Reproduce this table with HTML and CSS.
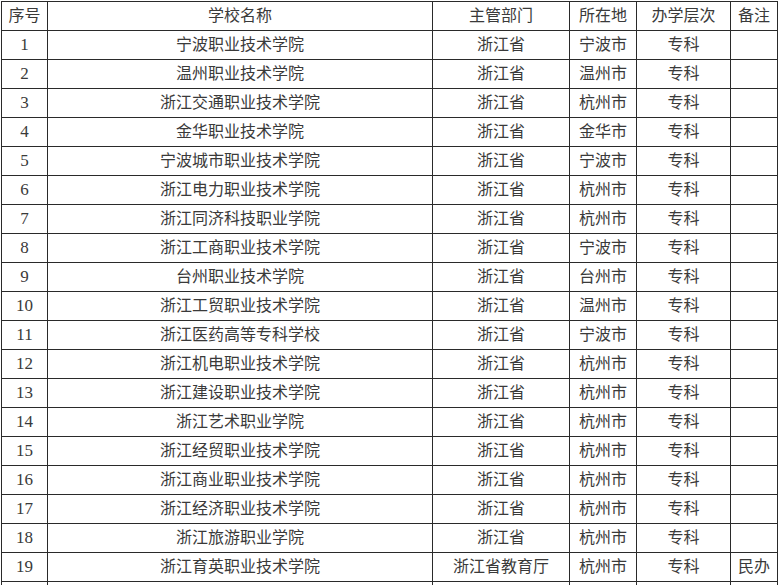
FILE: index.html
```html
<!DOCTYPE html>
<html lang="zh">
<head>
<meta charset="utf-8">
<title>学校列表</title>
<link rel="stylesheet" href="styles.css">
</head>
<body>
<table class="list">
<colgroup>
<col class="c1"><col class="c2"><col class="c3"><col class="c4"><col class="c5"><col class="c6">
</colgroup>
<tr><td>序号</td><td>学校名称</td><td>主管部门</td><td>所在地</td><td>办学层次</td><td>备注</td></tr>
<tr><td class="num">1</td><td>宁波职业技术学院</td><td>浙江省</td><td>宁波市</td><td>专科</td><td></td></tr>
<tr><td class="num">2</td><td>温州职业技术学院</td><td>浙江省</td><td>温州市</td><td>专科</td><td></td></tr>
<tr><td class="num">3</td><td>浙江交通职业技术学院</td><td>浙江省</td><td>杭州市</td><td>专科</td><td></td></tr>
<tr><td class="num">4</td><td>金华职业技术学院</td><td>浙江省</td><td>金华市</td><td>专科</td><td></td></tr>
<tr><td class="num">5</td><td>宁波城市职业技术学院</td><td>浙江省</td><td>宁波市</td><td>专科</td><td></td></tr>
<tr><td class="num">6</td><td>浙江电力职业技术学院</td><td>浙江省</td><td>杭州市</td><td>专科</td><td></td></tr>
<tr><td class="num">7</td><td>浙江同济科技职业学院</td><td>浙江省</td><td>杭州市</td><td>专科</td><td></td></tr>
<tr><td class="num">8</td><td>浙江工商职业技术学院</td><td>浙江省</td><td>宁波市</td><td>专科</td><td></td></tr>
<tr><td class="num">9</td><td>台州职业技术学院</td><td>浙江省</td><td>台州市</td><td>专科</td><td></td></tr>
<tr><td class="num">10</td><td>浙江工贸职业技术学院</td><td>浙江省</td><td>温州市</td><td>专科</td><td></td></tr>
<tr><td class="num">11</td><td>浙江医药高等专科学校</td><td>浙江省</td><td>宁波市</td><td>专科</td><td></td></tr>
<tr><td class="num">12</td><td>浙江机电职业技术学院</td><td>浙江省</td><td>杭州市</td><td>专科</td><td></td></tr>
<tr><td class="num">13</td><td>浙江建设职业技术学院</td><td>浙江省</td><td>杭州市</td><td>专科</td><td></td></tr>
<tr><td class="num">14</td><td>浙江艺术职业学院</td><td>浙江省</td><td>杭州市</td><td>专科</td><td></td></tr>
<tr><td class="num">15</td><td>浙江经贸职业技术学院</td><td>浙江省</td><td>杭州市</td><td>专科</td><td></td></tr>
<tr><td class="num">16</td><td>浙江商业职业技术学院</td><td>浙江省</td><td>杭州市</td><td>专科</td><td></td></tr>
<tr><td class="num">17</td><td>浙江经济职业技术学院</td><td>浙江省</td><td>杭州市</td><td>专科</td><td></td></tr>
<tr><td class="num">18</td><td>浙江旅游职业学院</td><td>浙江省</td><td>杭州市</td><td>专科</td><td></td></tr>
<tr><td class="num">19</td><td>浙江育英职业技术学院</td><td>浙江省教育厅</td><td>杭州市</td><td>专科</td><td>民办</td></tr>
<tr><td></td><td></td><td></td><td></td><td></td><td></td></tr>
</table>
</body>
</html>
```
FILE: styles.css
```css
html, body {
  margin: 0;
  padding: 0;
  background: #fff;
}
body {
  padding: 1px 0 0 1px;
  overflow: hidden;
  height: 585px;
}
.list {
  border-collapse: collapse;
  table-layout: fixed;
  width: 777px;
  font-family: "Liberation Serif", "Noto Sans CJK SC", serif;
  font-size: 16px;
  color: #3a3a3a;
}
.c1 { width: 46px; }
.c2 { width: 385px; }
.c3 { width: 137px; }
.c4 { width: 67px; }
.c5 { width: 94px; }
.c6 { width: 47px; }
.list td {
  border: 1px solid #2a2a2a;
  height: 28px;
  padding: 0;
  text-align: center;
  vertical-align: middle;
  line-height: 20px;
  white-space: nowrap;
  overflow: hidden;
}
.list td.num {
  font-size: 17px;
}
```
